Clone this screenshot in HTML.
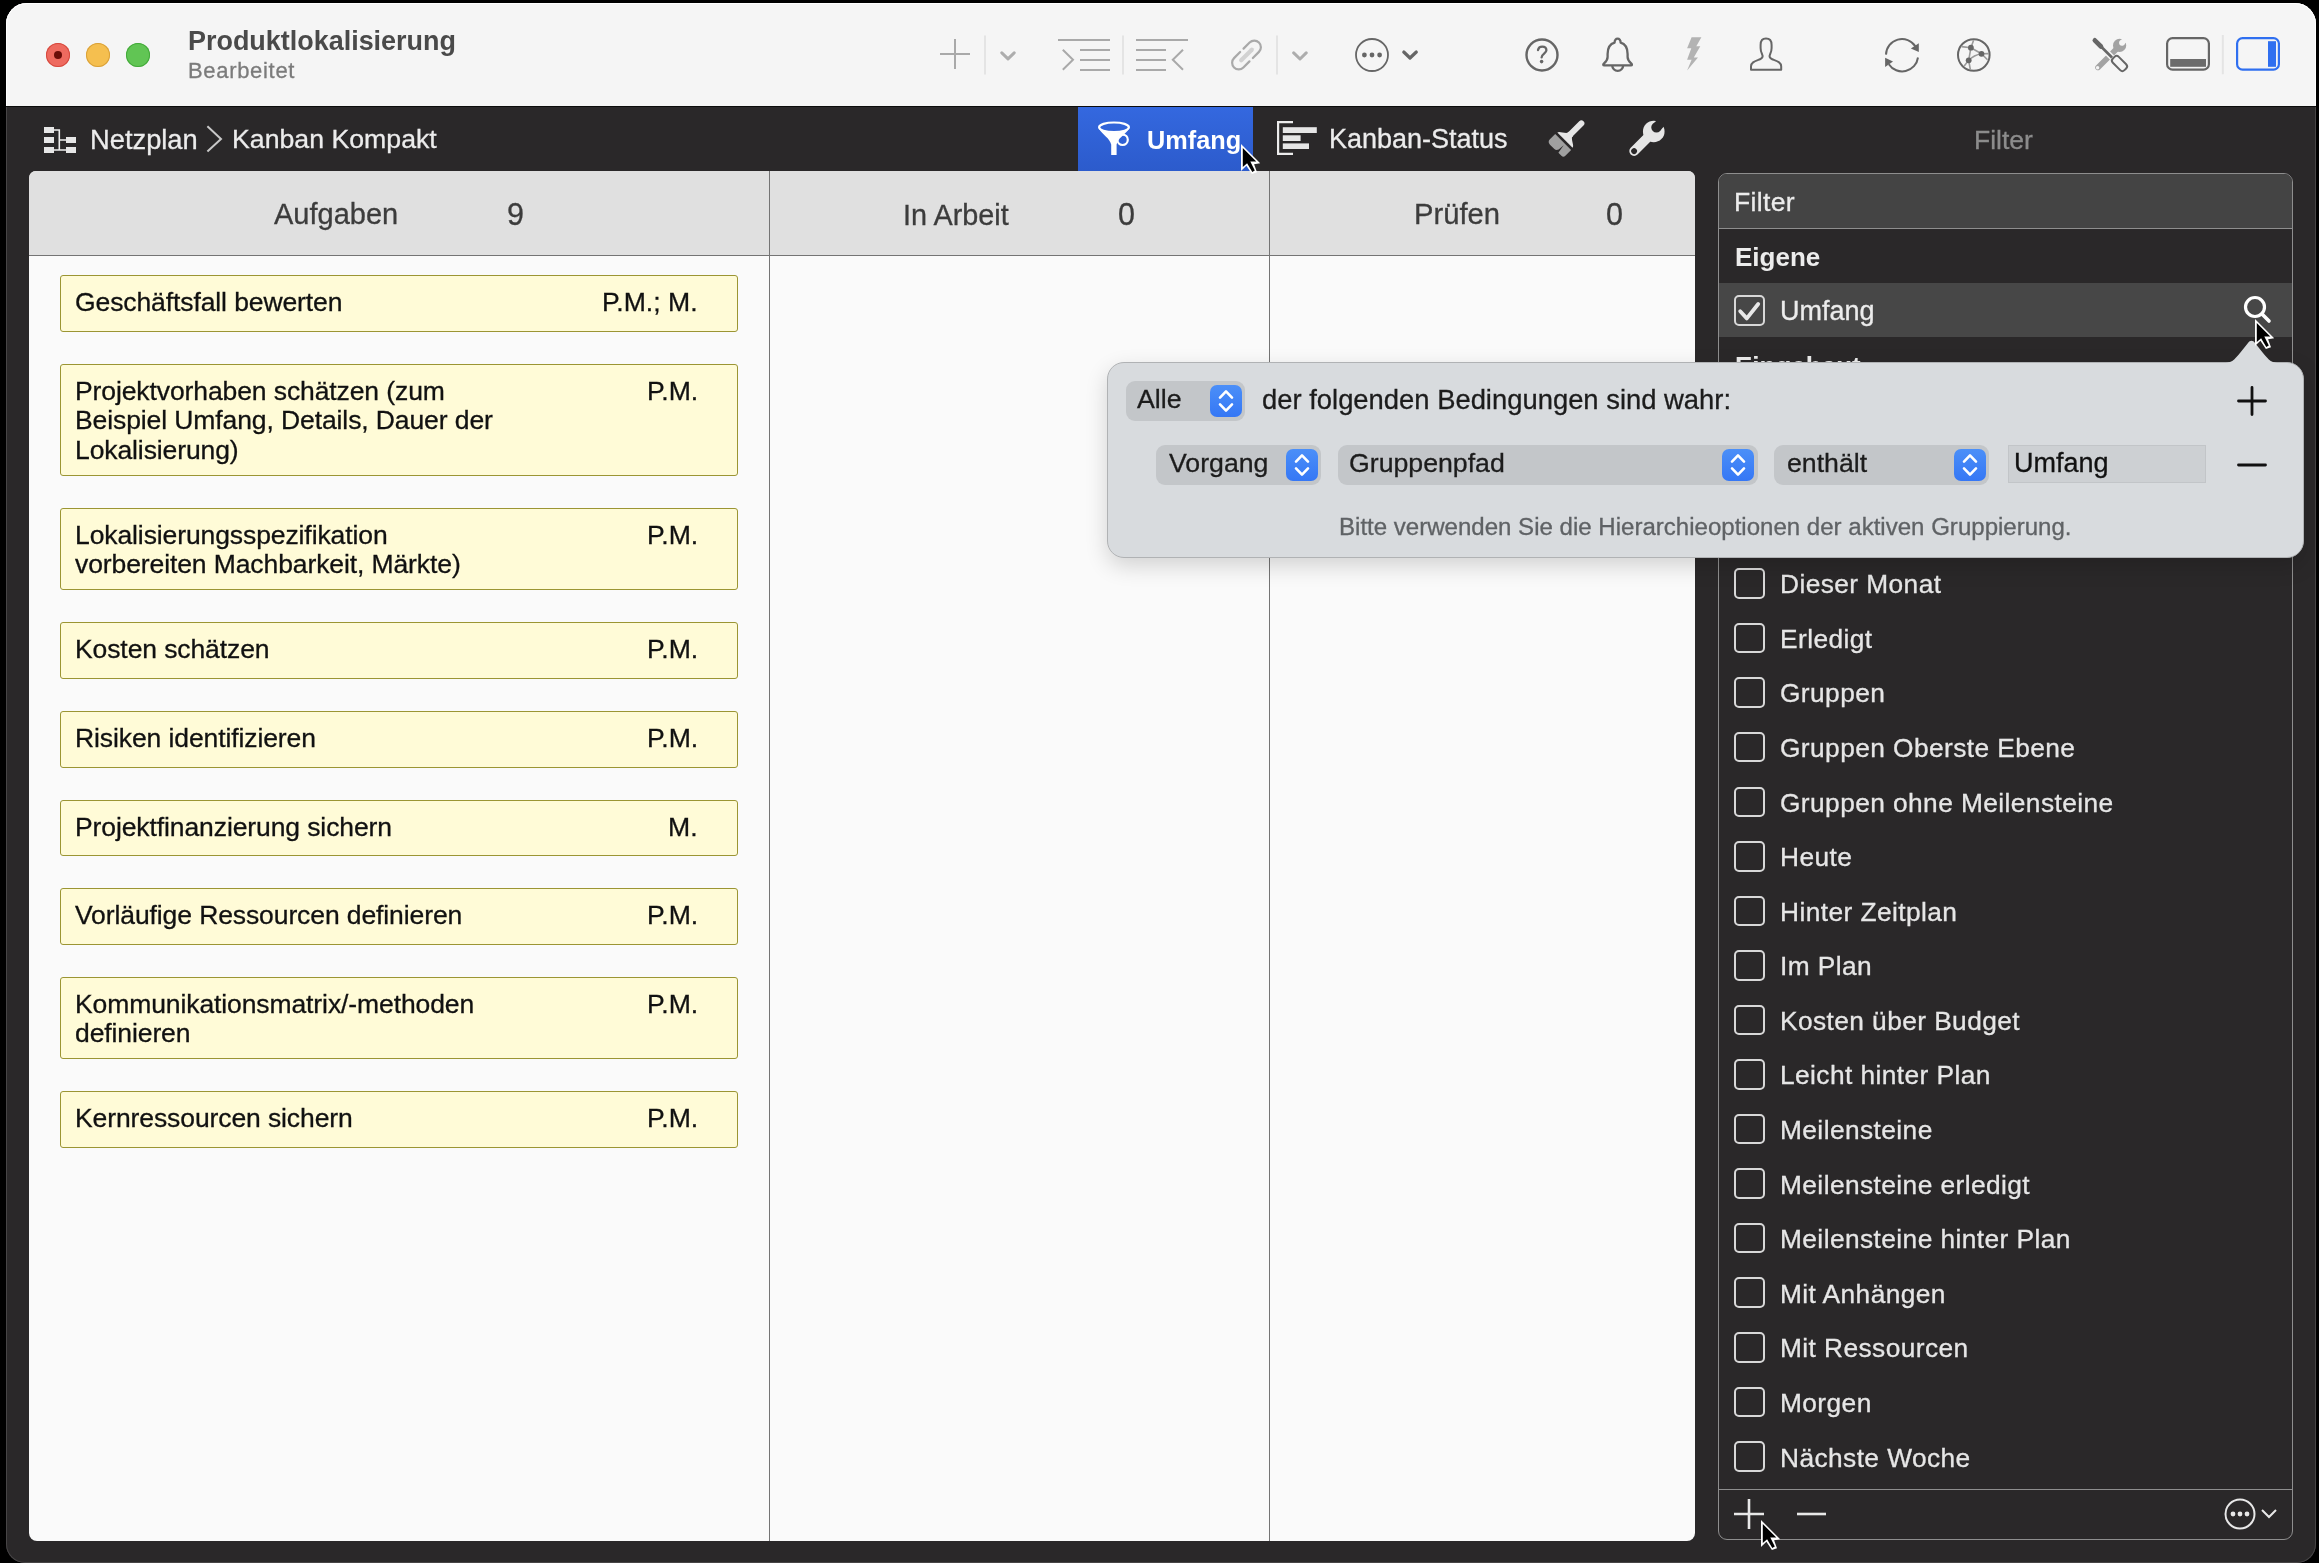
<!DOCTYPE html>
<html><head><meta charset="utf-8"><style>
*{margin:0;padding:0;box-sizing:border-box}
html,body{width:2319px;height:1563px;overflow:hidden;background:#000}
body{position:relative;font-family:"Liberation Sans",sans-serif}
.t{position:absolute;white-space:nowrap;line-height:1;will-change:transform;-webkit-text-stroke:0.3px currentColor}
svg{position:absolute;overflow:visible}
</style></head>
<body>
<div id="win" style="position:absolute;left:6px;top:3px;width:2310px;height:1559.5px;border-radius:21px 21px 19px 19px;background:#2a2829;box-shadow:inset 0 0 0 1px #474546"></div>
<div style="position:absolute;left:6px;top:3px;width:2310px;height:103px;background:#f5f5f5;border-radius:21px 21px 0 0;box-shadow:inset 0 1px 0 #fff, inset 1px 0 0 #fff, inset -1px 0 0 #fff"></div>
<div style="position:absolute;left:6px;top:106px;width:2310px;height:1px;background:#0c0c0c"></div>
<div style="position:absolute;left:46px;top:43px;width:24px;height:24px;border-radius:50%;background:#ee6a5f;box-shadow:inset 0 0 0 1px #d5493e"></div>
<div style="position:absolute;left:86px;top:43px;width:24px;height:24px;border-radius:50%;background:#f5bf4f;box-shadow:inset 0 0 0 1px #d9a13a"></div>
<div style="position:absolute;left:126px;top:43px;width:24px;height:24px;border-radius:50%;background:#61c554;box-shadow:inset 0 0 0 1px #43a93a"></div>
<div style="position:absolute;left:54px;top:51px;width:8px;height:8px;border-radius:50%;background:#6b0d08"></div>
<div class="t" style="left:187.50px;top:28.49px;font-size:26.95px;color:#4a4a4a;font-weight:700;-webkit-text-stroke:0;">Produktlokalisierung</div>
<div class="t" style="left:188.00px;top:60.38px;font-size:22px;color:#7b7b7b;font-weight:400;letter-spacing:0.68px">Bearbeitet</div>
<div class="t" style="left:89.50px;top:125.89px;font-size:27.3px;color:#ececec;font-weight:400;">Netzplan</div>
<div class="t" style="left:231.50px;top:126.40px;font-size:26.7px;color:#ececec;font-weight:400;">Kanban Kompakt</div>
<div style="position:absolute;left:1078px;top:107px;width:175px;height:64px;background:linear-gradient(#3468df,#2c5bcc)"></div>
<div class="t" style="left:1146.50px;top:127.58px;font-size:25.3px;color:#ffffff;font-weight:700;-webkit-text-stroke:0;">Umfang</div>
<div class="t" style="left:1328.50px;top:126.14px;font-size:27px;color:#ececec;font-weight:400;">Kanban-Status</div>
<div class="t" style="left:1974.00px;top:126.57px;font-size:26.5px;color:#8c8c8c;font-weight:400;">Filter</div>
<svg style="left:0;top:0" width="2319" height="110" viewBox="0 0 2319 110"><path d="M940 54 H970 M955 39 V69" stroke="#a9a9a9" stroke-width="2"/><path d="M985 35.5 V74.5 M1123 35.5 V74.5 M1277 35.5 V74.5 M2222.8 35 V74.3" stroke="#e4e4e4" stroke-width="2"/><path d="M1001.8 52.8 L1008 58.8 L1014.2 52.8 M1293.7 52.9 L1300 59 L1306.2 52.9" stroke="#adadad" stroke-width="3" fill="none" stroke-linecap="round" stroke-linejoin="round"/><path d="M1058 40 H1110 M1080 50 H1110 M1080 60 H1110 M1080 70 H1110 M1136 40 H1188 M1136 50 H1166 M1136 60 H1166 M1136 70 H1166" stroke="#a9a9a9" stroke-width="2"/><path d="M1062.8 49.8 L1073 59.8 L1062.8 69.8 M1183 49.8 L1172.8 59.8 L1183 69.8" stroke="#a9a9a9" stroke-width="2" fill="none"/><g transform="translate(1246.5 55) rotate(-45)"><path d="M-7.5 0 H7.5" stroke="#d2d2d2" stroke-width="4.2" stroke-linecap="round"/><path d="M2.4 -6.6 H11 A6.6 6.6 0 0 1 11 6.6 H2.4 M-2.4 -6.6 H-11 A6.6 6.6 0 0 0 -11 6.6 H-2.4" stroke="#a9a9a9" stroke-width="2.2" fill="none" stroke-linecap="round"/></g><circle cx="1372" cy="55" r="16" stroke="#666" stroke-width="1.8" fill="none"/><circle cx="1364.4" cy="55" r="2.4" fill="#666"/><circle cx="1372" cy="55" r="2.4" fill="#666"/><circle cx="1379.6" cy="55" r="2.4" fill="#666"/><path d="M1403.8 52 L1410 58 L1416.3 52" stroke="#666" stroke-width="3.2" fill="none" stroke-linecap="round" stroke-linejoin="round"/><circle cx="1542" cy="55" r="15.5" stroke="#666" stroke-width="2.4" fill="none"/><path d="M1538 50 C1538.5 47.5 1540 46.6 1542.2 46.6 C1544.8 46.6 1546.4 48.2 1546.4 50.2 C1546.4 53.2 1541.6 54 1541.6 57.4" stroke="#666" stroke-width="2.3" fill="none" stroke-linecap="round"/><circle cx="1541.6" cy="61.6" r="1.8" fill="#666"/><path d="M1614.6 42.6 C1614.2 37.4 1621 37.4 1620.6 42.6 C1625.6 44 1627.6 48 1627.6 54 L1627.6 57 C1627.6 60 1629.5 62 1631.4 63.6 C1632.4 64.6 1632 65.3 1631 65.3 L1604.2 65.3 C1603.2 65.3 1602.8 64.6 1603.8 63.6 C1605.7 62 1607.6 60 1607.6 57 L1607.6 54 C1607.6 48 1609.6 44 1614.6 42.6 Z" stroke="#666" stroke-width="2.3" fill="none" stroke-linejoin="round"/><path d="M1612.2 65.3 A5.5 5.5 0 0 0 1623.2 65.3" stroke="#666" stroke-width="2.3" fill="none"/><path d="M1691.6 37.2 L1701.4 37.2 L1696.3 46.3 L1700.3 46.3 L1693.8 57.5 L1698 57.5 L1687.1 70.6 L1691.6 59.7 L1687.1 59.7 L1691.3 48.2 L1687.1 48.2 Z" fill="#b3b3b3"/><path d="M1766 38.6 C1762.2 38.6 1760.6 41.6 1760.6 45 L1760.6 48 C1760.6 50.2 1761 52 1762 54 C1763.2 56.4 1762.6 58.2 1760 59.2 C1755 61.2 1751 62.2 1751 66.5 L1751 69.8 L1781.2 69.8 L1781.2 66.5 C1781.2 62.2 1777.2 61.2 1772.2 59.2 C1769.6 58.2 1769 56.4 1770.2 54 C1771.2 52 1771.6 50.2 1771.6 48 L1771.6 45 C1771.6 41.6 1770 38.6 1766 38.6 Z" stroke="#666" stroke-width="2" fill="none" stroke-linejoin="round"/><path d="M1886 54.6 A16 16 0 0 1 1915.5 46.5" stroke="#666" stroke-width="2" fill="none"/><path d="M1918.8 43.2 L1918.8 52 L1910.9 48.5 Z" fill="#666"/><path d="M1918 57.5 A16 16 0 0 1 1888.8 64.2" stroke="#666" stroke-width="2" fill="none"/><path d="M1885.1 57.7 L1885.1 67 L1893 61.4 Z" fill="#666"/><circle cx="1973.8" cy="55" r="15.8" stroke="#666" stroke-width="2" fill="none"/><path d="M1970.9 47.7 L1973.6 40.2 M1970.9 47.7 L1961.5 46.6 M1970.9 47.7 L1981.5 53.8 M1970.9 47.7 L1968.7 60.3 M1968.7 60.3 Q1974 55 1981.5 53.8 M1981.5 53.8 L1988.8 53.6 M1981.5 53.8 L1987.5 59.8 M1968.7 60.3 L1964.2 66 M1968.7 60.3 L1970.3 69.5" stroke="#9a9a9a" stroke-width="1.6" fill="none"/><circle cx="1970.9" cy="47.7" r="2.9" fill="#666"/><circle cx="1981.5" cy="53.8" r="2.9" fill="#666"/><circle cx="1968.7" cy="60.3" r="2.9" fill="#666"/><path d="M2098 67.4 L2116 49.4" stroke="#a3a3a3" stroke-width="5.6" stroke-linecap="round"/><circle cx="2119.6" cy="45.4" r="6.6" fill="#a3a3a3"/><path d="M2122.4 42.4 L2127 37.8" stroke="#f5f5f5" stroke-width="5.4" stroke-linecap="round"/><circle cx="2122" cy="42.8" r="2.9" fill="#f5f5f5"/><circle cx="2097.6" cy="67.8" r="1.7" fill="#f5f5f5"/><path d="M2095.5 41 L2112 57.5" stroke="#f5f5f5" stroke-width="6"/><path d="M2095.5 41 L2112 57.5" stroke="#666" stroke-width="2.6"/><path d="M2094.8 40.3 L2101 46.5" stroke="#666" stroke-width="4.6" stroke-linecap="round"/><g transform="translate(2119.5 63.5) rotate(45)"><rect x="-8.2" y="-4.2" width="16.4" height="8.4" rx="3" fill="#f5f5f5" stroke="#666" stroke-width="2"/></g><rect x="2167.1" y="38.1" width="41.8" height="31.6" rx="5.5" stroke="#666" stroke-width="2.2" fill="none"/><rect x="2170.2" y="59" width="35.8" height="7.8" fill="#6c6c6c"/><rect x="2237.1" y="38.1" width="41.8" height="31.6" rx="5.5" stroke="#2f6ff0" stroke-width="2.2" fill="none"/><rect x="2268" y="41.2" width="8" height="25.6" fill="#2f6ff0"/></svg>
<svg style="left:0;top:100px" width="2319" height="80" viewBox="0 100 2319 80"><g fill="#e6e6e6"><rect x="44" y="127" width="10" height="6"/><rect x="44" y="137" width="10" height="6"/><rect x="44" y="147" width="10" height="6"/><rect x="66" y="137" width="10" height="6"/><rect x="66" y="147" width="10" height="6"/></g><path d="M54 130 H59.3 V150 M59.3 140 H66 M54 150 H66" stroke="#eeeeee" stroke-width="1.6" fill="none"/><path d="M207.4 126.2 L221 139 L207.4 151.6" stroke="#c8c8c8" stroke-width="2" fill="none"/><ellipse cx="1114" cy="127.3" rx="14.9" ry="4.8" stroke="#fff" stroke-width="2.2" fill="none"/><path d="M1099.5 129.5 C1103 135 1109.5 138 1111.2 144.5 L1111.2 155 L1116.6 155 L1116.6 144.5 C1118 138 1124.5 135 1128.5 129.5 C1122 133.5 1106 133.5 1099.5 129.5 Z" fill="#fff"/><circle cx="1122.6" cy="139.8" r="5.2" stroke="#fff" stroke-width="2.2" fill="none"/><path d="M1293 122.2 H1278.1 V153.8 H1293" stroke="#ececec" stroke-width="2.2" fill="none"/><g fill="#e6e6e6"><rect x="1282.8" y="127.2" width="34" height="5.8"/><rect x="1282.8" y="135.3" width="17.8" height="5.7"/><rect x="1282.8" y="143.4" width="26.2" height="5.6"/></g><g transform="translate(1564.4 140.4) rotate(-45)"><path d="M7 0 H24" stroke="#e6e6e6" stroke-width="6" stroke-linecap="round"/><path d="M0.6 -10.6 C3 -10.6 4.5 -5.5 7.5 -3.2 L9 -3.2 L9 3.2 L7.5 3.2 C4.5 5.5 3 11 0.6 11 Z" fill="#e6e6e6"/><path d="M-2 -11 H-9.5 C-12 -11 -13.2 -9.5 -13.2 -7.2 L-13.2 -1 C-13.2 0.8 -12 1.8 -10.5 2.4 L-4 3 L-13 4.5 L-13 8.8 C-13 10.6 -12 11.5 -10.5 11.5 L-2 11.5 Z" fill="#a0a0a0"/></g><g transform="translate(1634.1 151.1) rotate(-45)"><path d="M0 0 H24" stroke="#e6e6e6" stroke-width="9.6" stroke-linecap="round"/><circle cx="27.8" cy="0" r="10.8" fill="#e6e6e6"/><circle cx="32.6" cy="-1" r="5.2" fill="#2a2829"/><path d="M33 -1 H42" stroke="#2a2829" stroke-width="9.5"/><circle cx="0" cy="0" r="2.9" fill="#2a2829"/></g></svg>
<div style="position:absolute;left:28.5px;top:171px;width:1666px;height:1370px;background:#fafafa;border-radius:7px 7px 8px 8px;overflow:hidden"></div>
<div style="position:absolute;left:28.5px;top:171px;width:1666px;height:84px;background:#e0e0e0;border-radius:7px 7px 0 0"></div>
<div style="position:absolute;left:28.5px;top:255px;width:1666px;height:1px;background:#747474"></div>
<div style="position:absolute;left:769px;top:171px;width:1px;height:1370px;background:#747474"></div>
<div style="position:absolute;left:1269px;top:171px;width:1px;height:1370px;background:#747474"></div>
<div class="t" style="left:274.00px;top:200.45px;font-size:29px;color:#3c3c3c;font-weight:400;">Aufgaben</div>
<div class="t" style="left:506.50px;top:199.18px;font-size:30.5px;color:#3c3c3c;font-weight:400;">9</div>
<div class="t" style="left:903.00px;top:200.62px;font-size:28.8px;color:#3c3c3c;font-weight:400;">In Arbeit</div>
<div class="t" style="left:1118.00px;top:199.18px;font-size:30.5px;color:#3c3c3c;font-weight:400;">0</div>
<div class="t" style="left:1414.00px;top:200.28px;font-size:29.2px;color:#3c3c3c;font-weight:400;">Prüfen</div>
<div class="t" style="left:1606.00px;top:199.18px;font-size:30.5px;color:#3c3c3c;font-weight:400;">0</div>
<div style="position:absolute;left:60px;top:275.2px;width:678px;height:57.2px;background:#fffbd7;border:1.5px solid #9b9533;border-radius:3px"></div>
<div class="t" style="left:74.80px;top:288.77px;font-size:26.5px;color:#111;font-weight:400;letter-spacing:-0.1px">Geschäftsfall bewerten</div>
<div class="t" style="right:1621.2px;top:288.68px;font-size:26.6px;color:#111;font-weight:400;">P.M.; M.</div>
<div style="position:absolute;left:60px;top:364.2px;width:678px;height:112.2px;background:#fffbd7;border:1.5px solid #9b9533;border-radius:3px"></div>
<div class="t" style="left:74.80px;top:377.77px;font-size:26.5px;color:#111;font-weight:400;letter-spacing:-0.1px">Projektvorhaben schätzen (zum</div>
<div class="t" style="left:74.80px;top:407.27px;font-size:26.5px;color:#111;font-weight:400;letter-spacing:-0.1px">Beispiel Umfang, Details, Dauer der</div>
<div class="t" style="left:74.80px;top:436.77px;font-size:26.5px;color:#111;font-weight:400;letter-spacing:-0.1px">Lokalisierung)</div>
<div class="t" style="right:1621.2px;top:377.68px;font-size:26.6px;color:#111;font-weight:400;">P.M.</div>
<div style="position:absolute;left:60px;top:508.2px;width:678px;height:82.2px;background:#fffbd7;border:1.5px solid #9b9533;border-radius:3px"></div>
<div class="t" style="left:74.80px;top:521.77px;font-size:26.5px;color:#111;font-weight:400;letter-spacing:-0.1px">Lokalisierungsspezifikation</div>
<div class="t" style="left:74.80px;top:551.27px;font-size:26.5px;color:#111;font-weight:400;letter-spacing:-0.1px">vorbereiten Machbarkeit, Märkte)</div>
<div class="t" style="right:1621.2px;top:521.68px;font-size:26.6px;color:#111;font-weight:400;">P.M.</div>
<div style="position:absolute;left:60px;top:622.2px;width:678px;height:57.2px;background:#fffbd7;border:1.5px solid #9b9533;border-radius:3px"></div>
<div class="t" style="left:74.80px;top:635.77px;font-size:26.5px;color:#111;font-weight:400;letter-spacing:-0.1px">Kosten schätzen</div>
<div class="t" style="right:1621.2px;top:635.68px;font-size:26.6px;color:#111;font-weight:400;">P.M.</div>
<div style="position:absolute;left:60px;top:711.2px;width:678px;height:57.2px;background:#fffbd7;border:1.5px solid #9b9533;border-radius:3px"></div>
<div class="t" style="left:74.80px;top:724.77px;font-size:26.5px;color:#111;font-weight:400;letter-spacing:-0.1px">Risiken identifizieren</div>
<div class="t" style="right:1621.2px;top:724.68px;font-size:26.6px;color:#111;font-weight:400;">P.M.</div>
<div style="position:absolute;left:60px;top:800.2px;width:678px;height:56.2px;background:#fffbd7;border:1.5px solid #9b9533;border-radius:3px"></div>
<div class="t" style="left:74.80px;top:813.77px;font-size:26.5px;color:#111;font-weight:400;letter-spacing:-0.1px">Projektfinanzierung sichern</div>
<div class="t" style="right:1621.2px;top:813.68px;font-size:26.6px;color:#111;font-weight:400;">M.</div>
<div style="position:absolute;left:60px;top:888.2px;width:678px;height:57.2px;background:#fffbd7;border:1.5px solid #9b9533;border-radius:3px"></div>
<div class="t" style="left:74.80px;top:901.77px;font-size:26.5px;color:#111;font-weight:400;letter-spacing:-0.1px">Vorläufige Ressourcen definieren</div>
<div class="t" style="right:1621.2px;top:901.68px;font-size:26.6px;color:#111;font-weight:400;">P.M.</div>
<div style="position:absolute;left:60px;top:977.2px;width:678px;height:82.2px;background:#fffbd7;border:1.5px solid #9b9533;border-radius:3px"></div>
<div class="t" style="left:74.80px;top:990.77px;font-size:26.5px;color:#111;font-weight:400;letter-spacing:-0.1px">Kommunikationsmatrix/-methoden</div>
<div class="t" style="left:74.80px;top:1020.27px;font-size:26.5px;color:#111;font-weight:400;letter-spacing:-0.1px">definieren</div>
<div class="t" style="right:1621.2px;top:990.68px;font-size:26.6px;color:#111;font-weight:400;">P.M.</div>
<div style="position:absolute;left:60px;top:1091.2px;width:678px;height:57.2px;background:#fffbd7;border:1.5px solid #9b9533;border-radius:3px"></div>
<div class="t" style="left:74.80px;top:1104.77px;font-size:26.5px;color:#111;font-weight:400;letter-spacing:-0.1px">Kernressourcen sichern</div>
<div class="t" style="right:1621.2px;top:1104.68px;font-size:26.6px;color:#111;font-weight:400;">P.M.</div>
<div style="position:absolute;left:1717.8px;top:173px;width:575.4px;height:1367px;border:1.3px solid #8e8e8e;border-radius:9px;background:#2a2829;overflow:hidden"></div>
<div style="position:absolute;left:1719.1px;top:174.3px;width:572.8px;height:53.9px;background:#444;border-radius:8px 8px 0 0"></div>
<div style="position:absolute;left:1719px;top:227.9px;width:573px;height:1.3px;background:#8e8e8e"></div>
<div class="t" style="left:1734.10px;top:188.57px;font-size:26.5px;color:#ececec;font-weight:400;letter-spacing:0.35px">Filter</div>
<div class="t" style="left:1734.70px;top:243.99px;font-size:26px;color:#ececec;font-weight:700;-webkit-text-stroke:0;">Eigene</div>
<div style="position:absolute;left:1719.1px;top:283px;width:572.8px;height:54px;background:#474747"></div>
<div class="t" style="left:1780.30px;top:297.94px;font-size:27px;color:#ececec;font-weight:400;">Umfang</div>
<div class="t" style="left:1734.70px;top:352.99px;font-size:26px;color:#ececec;font-weight:700;-webkit-text-stroke:0;">Eingebaut</div>
<div style="position:absolute;left:1734px;top:295.2px;width:30.5px;height:30.5px;border:2px solid #d8d8d8;border-radius:5px"></div>
<svg style="left:1734px;top:296px" width="30" height="30"><path d="M6.2 15.2 L12.8 22.4 L24.2 8" stroke="#e8e8e8" stroke-width="3.8" fill="none" stroke-linecap="round" stroke-linejoin="round"/></svg>
<svg style="left:2238px;top:292px" width="40" height="40"><circle cx="17" cy="15" r="9.5" stroke="#fff" stroke-width="3.2" fill="none"/><path d="M24 22 L31 29" stroke="#fff" stroke-width="3.6" stroke-linecap="round"/></svg>
<div style="position:absolute;left:1734px;top:568.30px;width:30.5px;height:30.5px;border:2px solid #d8d8d8;border-radius:5px"></div>
<div class="t" style="left:1780.10px;top:571.14px;font-size:26.3px;color:#e6e6e6;font-weight:400;letter-spacing:0.42px">Dieser Monat</div>
<div style="position:absolute;left:1734px;top:622.85px;width:30.5px;height:30.5px;border:2px solid #d8d8d8;border-radius:5px"></div>
<div class="t" style="left:1780.10px;top:625.73px;font-size:26.3px;color:#e6e6e6;font-weight:400;letter-spacing:0.42px">Erledigt</div>
<div style="position:absolute;left:1734px;top:677.40px;width:30.5px;height:30.5px;border:2px solid #d8d8d8;border-radius:5px"></div>
<div class="t" style="left:1780.10px;top:680.32px;font-size:26.3px;color:#e6e6e6;font-weight:400;letter-spacing:0.42px">Gruppen</div>
<div style="position:absolute;left:1734px;top:731.95px;width:30.5px;height:30.5px;border:2px solid #d8d8d8;border-radius:5px"></div>
<div class="t" style="left:1780.10px;top:734.91px;font-size:26.3px;color:#e6e6e6;font-weight:400;letter-spacing:0.42px">Gruppen Oberste Ebene</div>
<div style="position:absolute;left:1734px;top:786.50px;width:30.5px;height:30.5px;border:2px solid #d8d8d8;border-radius:5px"></div>
<div class="t" style="left:1780.10px;top:789.50px;font-size:26.3px;color:#e6e6e6;font-weight:400;letter-spacing:0.42px">Gruppen ohne Meilensteine</div>
<div style="position:absolute;left:1734px;top:841.05px;width:30.5px;height:30.5px;border:2px solid #d8d8d8;border-radius:5px"></div>
<div class="t" style="left:1780.10px;top:844.09px;font-size:26.3px;color:#e6e6e6;font-weight:400;letter-spacing:0.42px">Heute</div>
<div style="position:absolute;left:1734px;top:895.60px;width:30.5px;height:30.5px;border:2px solid #d8d8d8;border-radius:5px"></div>
<div class="t" style="left:1780.10px;top:898.68px;font-size:26.3px;color:#e6e6e6;font-weight:400;letter-spacing:0.42px">Hinter Zeitplan</div>
<div style="position:absolute;left:1734px;top:950.15px;width:30.5px;height:30.5px;border:2px solid #d8d8d8;border-radius:5px"></div>
<div class="t" style="left:1780.10px;top:953.27px;font-size:26.3px;color:#e6e6e6;font-weight:400;letter-spacing:0.42px">Im Plan</div>
<div style="position:absolute;left:1734px;top:1004.70px;width:30.5px;height:30.5px;border:2px solid #d8d8d8;border-radius:5px"></div>
<div class="t" style="left:1780.10px;top:1007.86px;font-size:26.3px;color:#e6e6e6;font-weight:400;letter-spacing:0.42px">Kosten über Budget</div>
<div style="position:absolute;left:1734px;top:1059.25px;width:30.5px;height:30.5px;border:2px solid #d8d8d8;border-radius:5px"></div>
<div class="t" style="left:1780.10px;top:1062.45px;font-size:26.3px;color:#e6e6e6;font-weight:400;letter-spacing:0.42px">Leicht hinter Plan</div>
<div style="position:absolute;left:1734px;top:1113.80px;width:30.5px;height:30.5px;border:2px solid #d8d8d8;border-radius:5px"></div>
<div class="t" style="left:1780.10px;top:1117.04px;font-size:26.3px;color:#e6e6e6;font-weight:400;letter-spacing:0.42px">Meilensteine</div>
<div style="position:absolute;left:1734px;top:1168.35px;width:30.5px;height:30.5px;border:2px solid #d8d8d8;border-radius:5px"></div>
<div class="t" style="left:1780.10px;top:1171.63px;font-size:26.3px;color:#e6e6e6;font-weight:400;letter-spacing:0.42px">Meilensteine erledigt</div>
<div style="position:absolute;left:1734px;top:1222.90px;width:30.5px;height:30.5px;border:2px solid #d8d8d8;border-radius:5px"></div>
<div class="t" style="left:1780.10px;top:1226.22px;font-size:26.3px;color:#e6e6e6;font-weight:400;letter-spacing:0.42px">Meilensteine hinter Plan</div>
<div style="position:absolute;left:1734px;top:1277.45px;width:30.5px;height:30.5px;border:2px solid #d8d8d8;border-radius:5px"></div>
<div class="t" style="left:1780.10px;top:1280.81px;font-size:26.3px;color:#e6e6e6;font-weight:400;letter-spacing:0.42px">Mit Anhängen</div>
<div style="position:absolute;left:1734px;top:1332.00px;width:30.5px;height:30.5px;border:2px solid #d8d8d8;border-radius:5px"></div>
<div class="t" style="left:1780.10px;top:1335.40px;font-size:26.3px;color:#e6e6e6;font-weight:400;letter-spacing:0.42px">Mit Ressourcen</div>
<div style="position:absolute;left:1734px;top:1386.55px;width:30.5px;height:30.5px;border:2px solid #d8d8d8;border-radius:5px"></div>
<div class="t" style="left:1780.10px;top:1389.99px;font-size:26.3px;color:#e6e6e6;font-weight:400;letter-spacing:0.42px">Morgen</div>
<div style="position:absolute;left:1734px;top:1441.10px;width:30.5px;height:30.5px;border:2px solid #d8d8d8;border-radius:5px"></div>
<div class="t" style="left:1780.10px;top:1444.58px;font-size:26.3px;color:#e6e6e6;font-weight:400;letter-spacing:0.42px">Nächste Woche</div>
<div style="position:absolute;left:1719px;top:1489px;width:573px;height:1.3px;background:#8e8e8e"></div>
<svg style="left:1730px;top:1496px" width="40" height="40"><path d="M19 3 V33 M4 18 H34" stroke="#e8e8e8" stroke-width="2.6"/></svg>
<svg style="left:1793px;top:1496px" width="40" height="40"><path d="M4 18 H33" stroke="#e8e8e8" stroke-width="2.6"/></svg>
<svg style="left:2222px;top:1496px" width="60" height="40"><circle cx="18" cy="18" r="14.5" stroke="#e8e8e8" stroke-width="2" fill="none"/><circle cx="11" cy="18" r="2.4" fill="#e8e8e8"/><circle cx="18" cy="18" r="2.4" fill="#e8e8e8"/><circle cx="25" cy="18" r="2.4" fill="#e8e8e8"/><path d="M40 14 L47 21 L54 14" stroke="#e8e8e8" stroke-width="2" fill="none"/></svg>
<div style="position:absolute;left:1107px;top:362.3px;width:1197px;height:195.3px;background:#d8dbde;border:1px solid #b0b2b4;border-radius:17px;box-shadow:0 8px 22px rgba(0,0,0,0.16)"></div>
<svg style="left:2210px;top:330px" width="90" height="40"><path d="M0 33.5 L10 33.5 C22 33.5 24 30 30 23 L38 13 C40 10 43 10 45 13 L53 23 C59 30 61 33.5 73 33.5 L76 33.5 L76 40 L0 40 Z" fill="#d8dbde"/></svg>
<div style="position:absolute;left:1126px;top:381px;width:119px;height:40px;background:#c3c6c9;border-radius:9px"></div>
<div style="position:absolute;left:1210px;top:385px;width:32px;height:32px;border-radius:7px;background:linear-gradient(#4b8ff8,#3577f5)"></div>
<svg style="left:1210px;top:385px" width="32" height="32"><path d="M10 12.6 L16 6.4 L22 12.6 M10 19.4 L16 25.6 L22 19.4" stroke="#fff" stroke-width="2.6" fill="none" stroke-linecap="round" stroke-linejoin="round"/></svg>
<div class="t" style="left:1137.10px;top:386.40px;font-size:26.7px;color:#1c1c1c;font-weight:400;">Alle</div>
<div class="t" style="left:1261.50px;top:386.21px;font-size:27.4px;color:#1c1c1c;font-weight:400;">der folgenden Bedingungen sind wahr:</div>
<svg style="left:2236px;top:385px" width="32" height="32"><path d="M16 2.5 V29.5 M2.5 16 H29.5" stroke="#111" stroke-width="2.8" stroke-linecap="round"/></svg>
<div style="position:absolute;left:1156px;top:445px;width:165px;height:40px;background:#c3c6c9;border-radius:9px"></div>
<div style="position:absolute;left:1286px;top:449px;width:32px;height:32px;border-radius:7px;background:linear-gradient(#4b8ff8,#3577f5)"></div>
<svg style="left:1286px;top:449px" width="32" height="32"><path d="M10 12.6 L16 6.4 L22 12.6 M10 19.4 L16 25.6 L22 19.4" stroke="#fff" stroke-width="2.6" fill="none" stroke-linecap="round" stroke-linejoin="round"/></svg>
<div class="t" style="left:1169.00px;top:450.40px;font-size:26.7px;color:#1c1c1c;font-weight:400;">Vorgang</div>
<div style="position:absolute;left:1338px;top:445px;width:420px;height:40px;background:#c3c6c9;border-radius:9px"></div>
<div style="position:absolute;left:1722px;top:449px;width:32px;height:32px;border-radius:7px;background:linear-gradient(#4b8ff8,#3577f5)"></div>
<svg style="left:1722px;top:449px" width="32" height="32"><path d="M10 12.6 L16 6.4 L22 12.6 M10 19.4 L16 25.6 L22 19.4" stroke="#fff" stroke-width="2.6" fill="none" stroke-linecap="round" stroke-linejoin="round"/></svg>
<div class="t" style="left:1349.30px;top:450.40px;font-size:26.7px;color:#1c1c1c;font-weight:400;">Gruppenpfad</div>
<div style="position:absolute;left:1774px;top:445px;width:215px;height:40px;background:#c3c6c9;border-radius:9px"></div>
<div style="position:absolute;left:1954px;top:449px;width:32px;height:32px;border-radius:7px;background:linear-gradient(#4b8ff8,#3577f5)"></div>
<svg style="left:1954px;top:449px" width="32" height="32"><path d="M10 12.6 L16 6.4 L22 12.6 M10 19.4 L16 25.6 L22 19.4" stroke="#fff" stroke-width="2.6" fill="none" stroke-linecap="round" stroke-linejoin="round"/></svg>
<div class="t" style="left:1786.50px;top:450.40px;font-size:26.7px;color:#1c1c1c;font-weight:400;">enthält</div>
<div style="position:absolute;left:2008px;top:445px;width:198px;height:38px;background:#cdd0d3;border:1px solid #c2c5c8"></div>
<div class="t" style="left:2013.50px;top:449.94px;font-size:27px;color:#111;font-weight:400;">Umfang</div>
<svg style="left:2236px;top:449px" width="32" height="32"><path d="M2.5 16 H29.5" stroke="#111" stroke-width="2.8" stroke-linecap="round"/></svg>
<div class="t" style="left:1338.50px;top:514.64px;font-size:24.05px;color:#5f6265;font-weight:400;">Bitte verwenden Sie die Hierarchieoptionen der aktiven Gruppierung.</div>
<svg style="left:1239.2px;top:141.6px" width="26" height="36" viewBox="-2 -2 26 36"><path d="M0 0 L0 26.9 L5.4 21.8 L10.9 30.1 L16 28.2 L13.1 20.2 L19.2 19.2 Z" fill="#fff"/><path d="M1.8 3.9 L1.8 22.9 L6.1 19.2 L11.3 27.9 L13.8 26.4 L9.3 17.4 L15.3 17.4 Z" fill="#000"/></svg>
<svg style="left:2253px;top:317px" width="26" height="36" viewBox="-2 -2 26 36"><path d="M0 0 L0 26.9 L5.4 21.8 L10.9 30.1 L16 28.2 L13.1 20.2 L19.2 19.2 Z" fill="#fff"/><path d="M1.8 3.9 L1.8 22.9 L6.1 19.2 L11.3 27.9 L13.8 26.4 L9.3 17.4 L15.3 17.4 Z" fill="#000"/></svg>
<svg style="left:1759.4px;top:1517.7px" width="26" height="36" viewBox="-2 -2 26 36"><path d="M0 0 L0 26.9 L5.4 21.8 L10.9 30.1 L16 28.2 L13.1 20.2 L19.2 19.2 Z" fill="#fff"/><path d="M1.8 3.9 L1.8 22.9 L6.1 19.2 L11.3 27.9 L13.8 26.4 L9.3 17.4 L15.3 17.4 Z" fill="#000"/></svg>

</body></html>
